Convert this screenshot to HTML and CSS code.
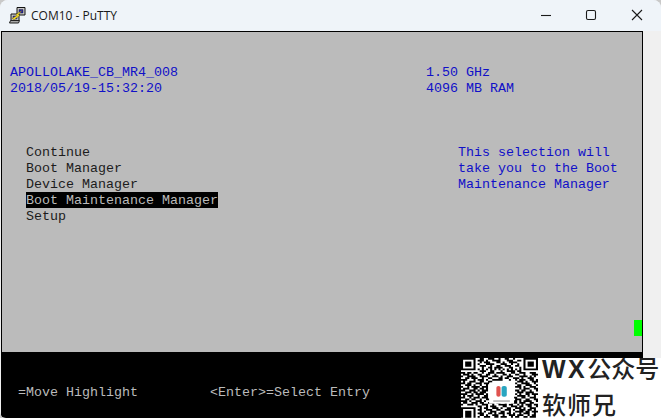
FILE: index.html
```html
<!DOCTYPE html>
<html lang="zh">
<head>
<meta charset="utf-8">
<title>COM10 - PuTTY</title>
<link rel="stylesheet" href="styles.css">
</head>
<body>
<div class="window">
  <header class="titlebar">
    <svg class="app-icon" width="18" height="18" viewBox="0 0 18 18">
      <path d="M8 1.500h8v7.500H8z" fill="#c8c8c8" stroke="#111"/>
      <path d="M10 3.500h4v3.500h-4z" fill="#1b1bb0" stroke="#333" stroke-width=".5"/>
      <path d="M2 8h8v6.500H2z" fill="#c8c8c8" stroke="#111"/>
      <path d="M4 10h4v3H4z" fill="#1b1bb0" stroke="#333" stroke-width=".5"/>
      <path d="M1.500 14.500h9l-1 2.500h-9z" fill="#a8a8a8" stroke="#222"/>
      <path d="M3 12.500l5-3-1-1 6-4-3.500 4 1 1-5 4z" fill="#f4dc28" stroke="#7a6a00" stroke-width=".4"/>
    </svg>
    <span class="title">COM10 - PuTTY</span>
    <div class="controls">
      <svg class="control" width="46" height="31" viewBox="0 0 46 31"><path d="M18 15.500h10" stroke="#1a1a1a" stroke-width="1.100" fill="none"/></svg>
      <svg class="control" width="46" height="31" viewBox="0 0 46 31"><rect x="17.500" y="10.500" width="9" height="9" rx="1.500" stroke="#1a1a1a" stroke-width="1.100" fill="none"/></svg>
      <svg class="control" width="46" height="31" viewBox="0 0 46 31"><path d="M17 10l10 10M27 10l-10 10" stroke="#1a1a1a" stroke-width="1.100" fill="none"/></svg>
    </div>
  </header>
  <main class="client">
    <div class="terminal">
      <pre class="screen">


 <span class="blue">APOLLOLAKE_CB_MR4_008</span>                               <span class="blue">1.50 GHz</span>
 <span class="blue">2018/05/19-15:32:20</span>                                 <span class="blue">4096 MB RAM</span>



   Continue                                              <span class="blue">This selection will</span>
   Boot Manager                                          <span class="blue">take you to the Boot</span>
   Device Manager                                        <span class="blue">Maintenance Manager</span>
   <span class="selected">Boot Maintenance Manager</span>
   Setup






                                                                               <span class="cursor"> </span>
</pre>
      <pre class="status">


  =Move Highlight         &lt;Enter&gt;=Select Entry
</pre>
    </div>
    <div class="scrollbar"></div>
  </main>
</div>
<aside class="watermark">
  <div class="qr">
    <svg class="qr-code" width="77" height="65" viewBox="0 0 37 37" preserveAspectRatio="none">
      <path fill="none" stroke="#000" d="M0 .5h7M9 .5h2M13 .5h3M18 .5h1M21 .5h2M25 .5h1M30 .5h7
      M0 1.500h1M6 1.500h1M8 1.500h3M12 1.500h1M15 1.500h4M22 1.500h3M27 1.500h2M30 1.500h1M36 1.500h1
      M0 2.500h1M2 2.500h3M6 2.500h1M9 2.500h1M11 2.500h3M17 2.500h2M20 2.500h1M23 2.500h4M30 2.500h1M32 2.500h3M36 2.500h1
      M0 3.500h1M2 3.500h3M6 3.500h1M8 3.500h1M12 3.500h4M19 3.500h3M24 3.500h1M27 3.500h1M30 3.500h1M32 3.500h3M36 3.500h1
      M0 4.500h1M2 4.500h3M6 4.500h1M9 4.500h3M14 4.500h1M17 4.500h2M21 4.500h3M26 4.500h2M30 4.500h1M32 4.500h3M36 4.500h1
      M0 5.500h1M6 5.500h1M10 5.500h1M13 5.500h2M16 5.500h4M23 5.500h2M28 5.500h1M30 5.500h1M36 5.500h1
      M0 6.500h7M8 6.500h1M10 6.500h1M12 6.500h1M14 6.500h1M16 6.500h1M18 6.500h1M20 6.500h1M22 6.500h1M24 6.500h1M26 6.500h1M28 6.500h1M30 6.500h7
      M9 7.500h3M14 7.500h2M19 7.500h1M22 7.500h4M27 7.500h2
      M0 8.500h2M3 8.500h2M6 8.500h2M10 8.500h1M13 8.500h3M17 8.500h4M24 8.500h2M28 8.500h3M33 8.500h3
      M1 9.500h3M5 9.500h1M8 9.500h2M12 9.500h2M16 9.500h1M20 9.500h2M23 9.500h1M26 9.500h2M30 9.500h1M34 9.500h3
      M0 10.500h1M3 10.500h3M6 10.500h1M9 10.500h4M15 10.500h3M19 10.500h1M22 10.500h3M28 10.500h4M33 10.500h1M35 10.500h1
      M2 11.500h2M5 11.500h3M10 11.500h1M13 11.500h2M18 11.500h2M21 11.500h2M25 11.500h3M29 11.500h1M32 11.500h3
      M0 12.500h3M6 12.500h1M8 12.500h3M12 12.500h1M15 12.500h5M23 12.500h1M26 12.500h1M28 12.500h3M33 12.500h2M36 12.500h1
      M1 13.500h1M4 13.500h3M9 13.500h2M13 13.500h2M27 13.500h3M31 13.500h1M34 13.500h3
      M0 14.500h2M3 14.500h2M7 14.500h3M11 14.500h3M26 14.500h1M29 14.500h4M35 14.500h1
      M2 15.500h3M6 15.500h1M9 15.500h1M12 15.500h1M27 15.500h2M31 15.500h3M36 15.500h1
      M0 16.500h1M3 16.500h1M5 16.500h4M10 16.500h3M26 16.500h3M30 16.500h1M33 16.500h3
      M1 17.500h3M6 17.500h2M9 17.500h2M12 17.500h1M28 17.500h1M30 17.500h3M35 17.500h2
      M0 18.500h2M4 18.500h3M8 18.500h1M10 18.500h3M26 18.500h2M29 18.500h2M33 18.500h1M36 18.500h1
      M2 19.500h3M6 19.500h2M9 19.500h3M27 19.500h3M31 19.500h4
      M0 20.500h3M5 20.500h1M7 20.500h4M12 20.500h1M26 20.500h1M28 20.500h1M31 20.500h2M34 20.500h3
      M1 21.500h1M3 21.500h3M8 21.500h1M11 21.500h2M27 21.500h4M32 21.500h1M35 21.500h1
      M0 22.500h2M4 22.500h1M6 22.500h3M10 22.500h3M15 22.500h3M20 22.500h2M24 22.500h3M29 22.500h2M33 22.500h3
      M2 23.500h2M5 23.500h2M9 23.500h1M12 23.500h3M17 23.500h1M19 23.500h3M23 23.500h1M26 23.500h3M31 23.500h2M35 23.500h2
      M0 24.500h3M4 24.500h1M7 24.500h3M11 24.500h1M14 24.500h2M18 24.500h3M22 24.500h2M25 24.500h2M28 24.500h1M30 24.500h4M36 24.500h1
      M1 25.500h2M5 25.500h3M9 25.500h2M13 25.500h3M17 25.500h2M21 25.500h1M24 25.500h3M28 25.500h3M33 25.500h2
      M0 26.500h1M3 26.500h3M7 26.500h1M10 26.500h3M15 26.500h1M18 26.500h4M23 26.500h2M27 26.500h1M29 26.500h1M31 26.500h3M35 26.500h2
      M8 27.500h2M12 27.500h1M14 27.500h3M20 27.500h2M24 27.500h3M28 27.500h2M32 27.500h2M36 27.500h1
      M0 28.500h7M9 28.500h1M11 28.500h2M15 28.500h3M19 28.500h1M22 28.500h2M26 28.500h3M30 28.500h1M33 28.500h3
      M0 29.500h1M6 29.500h1M8 29.500h2M12 29.500h3M17 29.500h2M21 29.500h3M25 29.500h1M28 29.500h3M32 29.500h2M35 29.500h1
      M0 30.500h1M2 30.500h3M6 30.500h1M9 30.500h1M11 30.500h1M14 30.500h3M19 30.500h2M23 30.500h1M26 30.500h4M31 30.500h2M34 30.500h3
      M0 31.500h1M2 31.500h3M6 31.500h1M8 31.500h3M13 31.500h2M16 31.500h1M18 31.500h3M22 31.500h2M25 31.500h1M28 31.500h1M30 31.500h3M35 31.500h1
      M0 32.500h1M2 32.500h3M6 32.500h1M9 32.500h2M12 32.500h1M15 32.500h3M20 32.500h1M23 32.500h3M27 32.500h3M32 32.500h1M34 32.500h2
      M0 33.500h1M2 33.500h3M6 33.500h1M8 33.500h1M11 33.500h3M16 33.500h2M19 33.500h3M24 33.500h1M26 33.500h2M30 33.500h2M33 33.500h3"/>
      <rect class="qr-logo-bg" x="13.500" y="14" width="12" height="12"/>
      <rect class="qr-logo-red" x="17" y="16" width="2" height="6" rx="1"/>
      <rect class="qr-logo-teal" x="19.500" y="16" width="2.500" height="6" rx="1"/>
      <path class="qr-logo-line" d="M15.500 24.500h8"/>
    </svg>
  </div>
  <div class="brand">
    <span class="brand-top"><span class="brand-latin">WX</span>公众号</span>
    <span class="brand-bottom">软师兄</span>
  </div>
</aside>
</body>
</html>
```
FILE: styles.css
```css
* {
  box-sizing: border-box;
}

html,
body {
  margin: 0;
  padding: 0;
  width: 661px;
  height: 418px;
  overflow: hidden;
  background: #c9c9c9;
}

body {
  position: relative;
}

.window {
  width: 661px;
  height: 418px;
  display: flex;
  flex-direction: column;
  background: #f0f0f0;
  border-radius: 8px 8px 0 6px;
  overflow: hidden;
  box-shadow: inset 0 1px 0 #dfe3e8;
}

.titlebar {
  height: 31px;
  flex: none;
  display: flex;
  align-items: center;
  padding-left: 9px;
  background: #eff4f9;
  font-family: "Open Sans", "Noto Sans", sans-serif;
  font-size: 12px;
  color: #1a1a1a;
}

.app-icon {
  flex: none;
  margin-top: -1px;
}

.title {
  margin-left: 4px;
}

.controls {
  margin-left: auto;
  display: flex;
}

.control {
  display: block;
}

.client {
  flex: 1;
  display: flex;
  align-items: flex-start;
  padding-left: 1px;
}

.terminal {
  width: 642px;
  flex: none;
  border: 1px solid #000;
  border-bottom: 0;
  display: flex;
  flex-direction: column;
}

.screen,
.status {
  margin: 0;
  width: 640px;
  padding-top: 1px;
  font-family: "Liberation Mono", "Courier New", monospace;
  font-size: 13.33px;
  line-height: 16px;
  white-space: pre;
  overflow: hidden;
}

.screen {
  height: 320px;
  background: #bbbbbb;
  color: #1c1c1c;
}

.status {
  height: 66px;
  background: #000;
  color: #bbbbbb;
}

.blue {
  color: #1010c8;
}

.selected {
  padding-top: 1px;
  background: #000;
  color: #bbbbbb;
}

.cursor {
  padding-top: 1px;
  background: #00ff00;
}

.scrollbar {
  flex: 1;
}

.watermark {
  position: absolute;
  left: 461px;
  top: 358px;
  width: 200px;
  height: 60px;
  display: flex;
  background: #fff;
}

.qr {
  width: 77px;
  height: 60px;
  flex: none;
  overflow: hidden;
}

.qr-code {
  display: block;
  filter: blur(0.5px);
}

.qr-logo-bg {
  fill: #fff;
}

.qr-logo-red {
  fill: #e0534f;
}

.qr-logo-teal {
  fill: #2aa5c0;
}

.qr-logo-line {
  stroke: #888;
  stroke-width: 0.6;
  fill: none;
}

.brand {
  flex: 1;
  display: flex;
  flex-direction: column;
  padding-left: 4px;
  font-family: "Noto Sans CJK SC", "Liberation Sans", sans-serif;
  font-weight: 500;
  color: #222;
  white-space: nowrap;
}

.brand-top {
  margin-top: -1px;
  font-size: 24px;
  line-height: 22px;
}

.brand-latin {
  font-family: "Liberation Sans", sans-serif;
  font-size: 25px;
  font-weight: 700;
  letter-spacing: 2.5px;
}

.brand-bottom {
  font-size: 24px;
  line-height: 22px;
  letter-spacing: 1px;
  margin-top: 13px;
}
```
